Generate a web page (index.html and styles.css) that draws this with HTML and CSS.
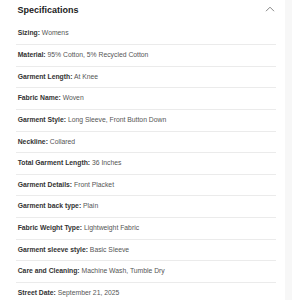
FILE: index.html
```html
<!DOCTYPE html>
<html>
<head>
<meta charset="utf-8">
<link rel="stylesheet" href="styles.css">
</head>
<body>
<div class="page">
  <section class="panel">
    <div class="header">
      <h2 class="title">Specifications</h2>
      <svg class="chevron" width="10" height="6" viewBox="0 0 10 6"><path d="M1 5.2 L5 1.2 L9 5.2" fill="none" stroke="#777" stroke-width="0.9"/></svg>
    </div>
    <ul class="specs">
      <li class="row"><b>Sizing:</b> Womens</li>
      <li class="row"><b>Material:</b> 95% Cotton, 5% Recycled Cotton</li>
      <li class="row"><b>Garment Length:</b> At Knee</li>
      <li class="row"><b>Fabric Name:</b> Woven</li>
      <li class="row"><b>Garment Style:</b> Long Sleeve, Front Button Down</li>
      <li class="row"><b>Neckline:</b> Collared</li>
      <li class="row"><b>Total Garment Length:</b> 36 Inches</li>
      <li class="row"><b>Garment Details:</b> Front Placket</li>
      <li class="row"><b>Garment back type:</b> Plain</li>
      <li class="row"><b>Fabric Weight Type:</b> Lightweight Fabric</li>
      <li class="row"><b>Garment sleeve style:</b> Basic Sleeve</li>
      <li class="row"><b>Care and Cleaning:</b> Machine Wash, Tumble Dry</li>
      <li class="row"><b>Street Date:</b> September 21, 2025</li>
    </ul>
  </section>
  <div class="strip"></div>
</div>
</body>
</html>
```
FILE: styles.css
```css
html, body {
  margin: 0;
  padding: 0;
  background: #ffffff;
  font-family: "Liberation Sans", Arial, sans-serif;
  overflow: hidden;
}
.page {
  display: flex;
  height: 300px;
}
.panel {
  width: 285px;
  flex: none;
  background: #ffffff;
}
.strip {
  width: 7px;
  flex: none;
  background: #f7f7f7;
}
.header {
  display: flex;
  align-items: center;
  justify-content: space-between;
  height: 23.36px;
  padding: 0 10px 0 17.5px;
  box-sizing: border-box;
}
.title {
  margin: -2px 0 0 0;
  font-size: 9px;
  font-weight: bold;
  color: #222222;
  line-height: 11px;
}
.chevron {
  margin-top: -5px;
  display: block;
}
.specs {
  list-style: none;
  margin: 0 9px 0 16px;
  padding: 0;
}
.row {
  font-size: 6.8px;
  line-height: 8.64px;
  padding: 6px 0 6px 1.7px;
  border-bottom: 1px solid #ebebeb;
  color: #555555;
  white-space: nowrap;
}
.row b {
  color: #333333;
  font-weight: bold;
}
```
